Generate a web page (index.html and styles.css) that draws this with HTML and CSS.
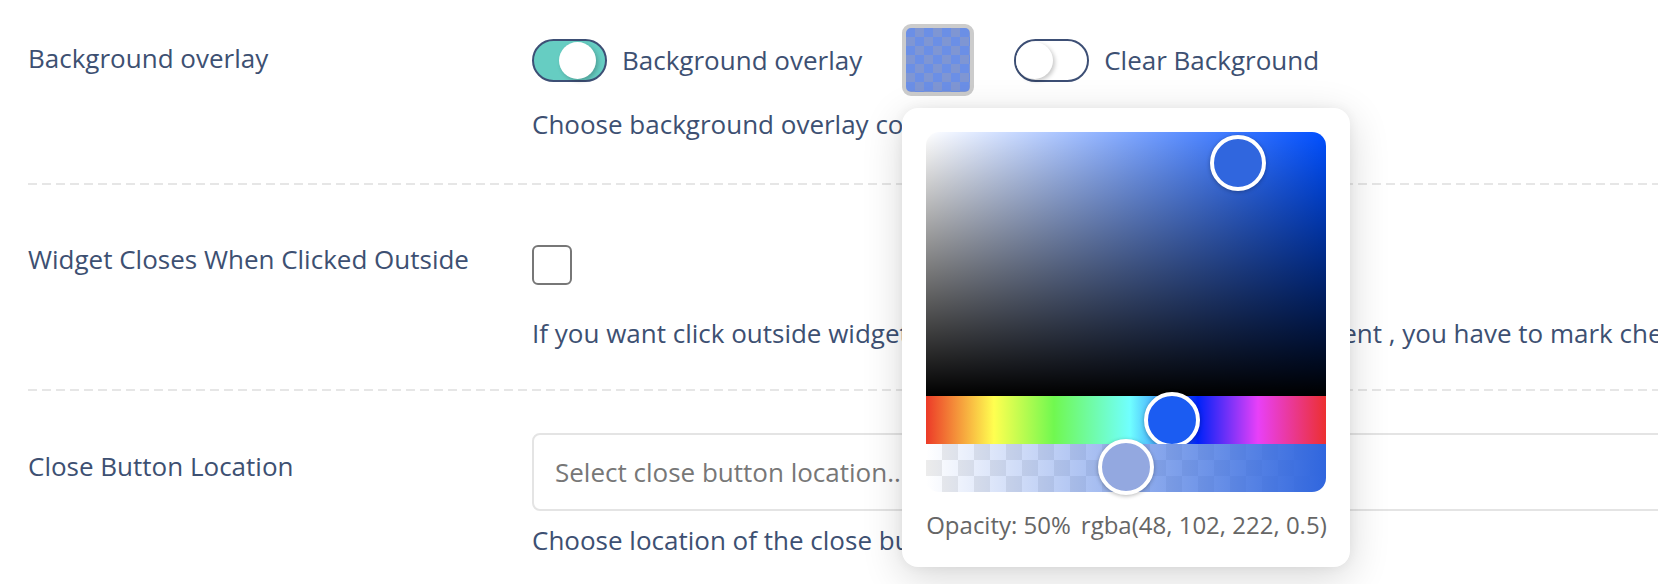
FILE: index.html
```html
<!DOCTYPE html>
<html lang="en">
<head>
<meta charset="utf-8">
<title>Widget settings</title>
<link rel="stylesheet" href="styles.css">
</head>
<body>
<div class="settings">
  <div class="row row-1">
    <div class="label">Background overlay</div>
    <div class="field">
      <div class="controls">
        <span class="toggle on"><span class="knob"></span></span>
        <span class="ctl-text">Background overlay</span>
        <div class="swatch-wrap">
          <span class="swatch"></span>
          <div class="picker">
            <div class="sat"><span class="handle h-sat"></span></div>
            <div class="hue"><span class="handle h-hue"></span></div>
            <div class="alpha"><span class="handle h-alpha"></span></div>
            <div class="picker-info"><span>Opacity: 50%</span><span>rgba(48, 102, 222, 0.5)</span></div>
          </div>
        </div>
        <span class="toggle"><span class="knob"></span></span>
        <span class="ctl-text">Clear Background</span>
      </div>
      <p class="help help-1">Choose background overlay color</p>
    </div>
  </div>
  <div class="row row-2">
    <div class="label">Widget Closes When Clicked Outside</div>
    <div class="field">
      <span class="checkbox"></span>
      <p class="help help-2">If you want click outside widget to hide the widget and back to content , you have to mark checkbox</p>
    </div>
  </div>
  <div class="row row-3">
    <div class="label">Close Button Location</div>
    <div class="field">
      <div class="select">Select close button location...</div>
      <p class="help help-3">Choose location of the close button</p>
    </div>
  </div>
</div>
</body>
</html>
```
FILE: styles.css
```css
html, body {
  margin: 0;
  padding: 0;
  background: #ffffff;
  overflow: hidden;
}
body {
  font-family: "Open Sans", "Noto Sans", sans-serif;
  font-size: 26px;
  color: #3d5072;
  width: 1658px;
  height: 584px;
}
.settings {
  padding-left: 28px;
}
.row {
  display: grid;
  grid-template-columns: 504px 1fr;
  background-image: linear-gradient(to right, #e6e6e6 62%, rgba(255,255,255,0) 0);
  background-size: 14px 2px;
  background-repeat: repeat-x;
  background-position: left bottom;
}
.label {
  line-height: 36px;
  white-space: nowrap;
}
.field {
  white-space: nowrap;
}
.help {
  margin: 0;
  line-height: 36px;
}
/* row 1 */
.row-1 { padding: 24px 0 43px; }
.row-1 .label { padding-top: 16px; }
.controls {
  display: flex;
  align-items: center;
  height: 72px;
}
.toggle {
  position: relative;
  box-sizing: border-box;
  width: 75px;
  height: 43px;
  border: 2px solid #3d4f75;
  border-radius: 22px;
  background: #ffffff;
  flex: none;
}
.toggle.on { background: #66cdc2; }
.knob {
  position: absolute;
  top: 1px;
  left: 0;
  width: 37px;
  height: 37px;
  border-radius: 50%;
  background: #ffffff;
  box-shadow: 2px 2px 4px rgba(0,0,0,0.22);
}
.toggle.on .knob { left: 25px; }
.ctl-text {
  margin-left: 15px;
  line-height: 36px;
}
.swatch-wrap {
  position: relative;
  margin: 0 40px;
  flex: none;
}
.swatch {
  display: block;
  box-sizing: border-box;
  width: 72px;
  height: 72px;
  border: 4px solid #cccccc;
  border-radius: 9px;
  background-color: #6b8fe6;
  background-image:
    linear-gradient(45deg, #7f96d3 25%, transparent 25%, transparent 75%, #7f96d3 75%),
    linear-gradient(45deg, #7f96d3 25%, transparent 25%, transparent 75%, #7f96d3 75%);
  background-size: 18px 18px;
  background-position: 0 0, 9px 9px;
}
.help-1 { margin-top: 10px; }

/* picker popover */
.picker {
  position: absolute;
  left: 0;
  top: 84px;
  z-index: 5;
  box-sizing: border-box;
  width: 448px;
  height: 459px;
  padding: 24px;
  background: #ffffff;
  border-radius: 16px;
  box-shadow: 0 10px 40px rgba(0,0,0,0.16), 0 0 12px rgba(0,0,0,0.05);
}
.sat {
  position: relative;
  height: 264px;
  border-radius: 14px 14px 0 0;
  background:
    linear-gradient(to top, #000000, rgba(0,0,0,0)),
    linear-gradient(to right, #ffffff, rgb(0,79,255));
}
.hue {
  position: relative;
  height: 48px;
  background: linear-gradient(to right, #ec3a28 0%, #ffff50 17%, #70f850 32%, #70ffff 51%, #0022f8 68%, #e840f8 83%, #ec3030 100%);
}
.alpha {
  position: relative;
  height: 48px;
  border-radius: 0 0 14px 14px;
  background-color: #ffffff;
  background-image:
    linear-gradient(to right, rgba(48,102,222,0), rgba(48,102,222,1)),
    linear-gradient(45deg, #ececec 25%, transparent 25%, transparent 75%, #ececec 75%),
    linear-gradient(45deg, #ececec 25%, transparent 25%, transparent 75%, #ececec 75%);
  background-size: 100% 100%, 32px 32px, 32px 32px;
  background-position: 0 0, 0 0, 16px 16px;
}
.handle {
  position: absolute;
  box-sizing: border-box;
  width: 56px;
  height: 56px;
  margin: -28px 0 0 -28px;
  border: 4px solid #ffffff;
  border-radius: 50%;
  box-shadow: 0 1px 4px rgba(0,0,0,0.3);
}
.h-sat { left: 312px; top: 31px; background: rgb(48,102,222); }
.h-hue { left: 246px; top: 24px; background: #1b5cf2; }
.h-alpha { left: 200px; top: 23px; background: #93a8e0; }
.picker-info {
  display: flex;
  gap: 10px;
  margin-top: 15px;
  font-size: 24px;
  line-height: 36px;
  color: #666666;
}

/* row 2 */
.row-2 { padding: 60px 0 40px; }
.row-2 .label { margin-top: -4px; }
.checkbox {
  display: block;
  box-sizing: border-box;
  width: 40px;
  height: 40px;
  border: 2.5px solid #777777;
  border-radius: 6px;
  background: #ffffff;
}
.help-2 { margin-top: 30px; }

/* row 3 */
.row-3 { padding: 42px 0 40px; }
.row-3 .label { padding-top: 15px; }
.select {
  box-sizing: border-box;
  width: 1300px;
  height: 78px;
  padding-left: 21px;
  border: 2px solid #e4e4e4;
  border-radius: 8px;
  line-height: 74px;
  color: #777777;
}
.help-3 { margin-top: 11px; }
```
